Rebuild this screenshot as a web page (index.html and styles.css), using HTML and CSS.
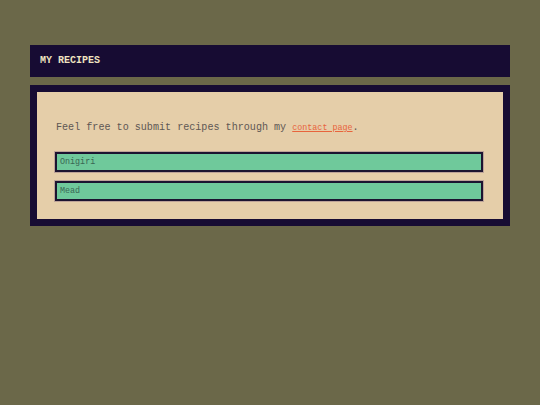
FILE: index.html
```html
<!DOCTYPE html>
<html>
<head>
<meta charset="utf-8">
<link rel="stylesheet" href="styles.css">
</head>
<body>
<div class="page">
  <header class="bar"><h1 class="title">MY RECIPES</h1></header>
  <main class="panel">
    <div class="panel-inner">
      <p class="intro">Feel free to submit recipes through my <a class="link" href="#">contact page</a>.</p>
      <ul class="list">
        <li class="item">Onigiri</li>
        <li class="item">Mead</li>
      </ul>
    </div>
  </main>
</div>
</body>
</html>
```

FILE: styles.css
```css
html, body {
  margin: 0;
  padding: 0;
  background: #6b6849;
}
body {
  width: 540px;
  height: 405px;
  font-family: "Courier New", Courier, "Nimbus Mono PS", "FreeMono", "Liberation Mono", monospace;
}
.page {
  padding: 45px 30px 0 30px;
  display: flex;
  flex-direction: column;
  gap: 8px;
}
.bar {
  background: #170c33;
  height: 32px;
  display: flex;
  align-items: center;
  padding-left: 10px;
}
.title {
  margin: 0;
  font-size: 10px;
  font-weight: bold;
  color: #efe3c0;
  line-height: 12px;
}
.panel {
  background: #170c33;
  padding: 7px;
}
.panel-inner {
  background: #e5cea9;
  padding: 18px 20px 18px 18px;
}
.intro {
  margin: 11px 0 17px 1px;
  font-size: 10.1px;
  line-height: 14px;
  color: #5e5754;
}
.link {
  color: #e8643c;
  font-size: 8.4px;
  text-decoration: underline;
}
.list {
  list-style: none;
  margin: 0;
  padding: 0;
  display: flex;
  flex-direction: column;
  gap: 9px;
}
.item {
  height: 16px;
  border: 2px solid #1c1430;
  box-shadow: 0 0 0 1px rgba(140, 110, 130, 0.45);
  background: #6fc99b;
  color: #3a6654;
  font-size: 8.4px;
  line-height: 16px;
  padding-left: 3px;
}
```
